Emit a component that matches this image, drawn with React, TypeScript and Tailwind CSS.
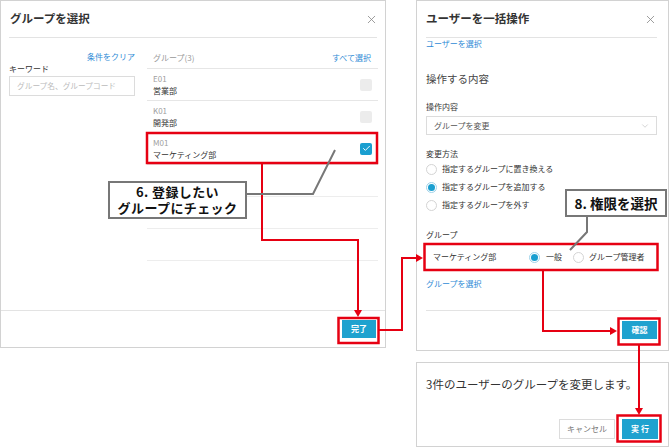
import { ChevronDown, X, Check } from 'lucide-react';

const BLUE = 'text-[#2f8bd6]';

function Radio({ checked }: { checked?: boolean }) {
  return checked ? (
    <span className="w-[11px] h-[11px] rounded-full border border-[#9fd3ea] bg-white flex items-center justify-center shrink-0">
      <span className="w-[7px] h-[7px] rounded-full bg-[#1a9fd0]" />
    </span>
  ) : (
    <span className="w-[11px] h-[11px] rounded-full border border-[#d4d4d4] bg-white shrink-0" />
  );
}

function GroupRow({ code, name, checked }: { code: string; name: string; checked?: boolean }) {
  return (
    <div className="h-[32px] border-b border-[#e6e6e6] flex items-center justify-between pl-[6px] pr-[6px]">
      <div className="flex flex-col">
        <span className="text-[8px] leading-[12px] text-[#a0a0a0]">{code}</span>
        <span className="text-[8px] leading-[12px] text-[#333]">{name}</span>
      </div>
      {checked ? (
        <span className="w-[12px] h-[12px] rounded-[2px] bg-[#1a9fd0] flex items-center justify-center">
          <Check size={9} strokeWidth={2.5} className="text-white" />
        </span>
      ) : (
        <span className="w-[12px] h-[12px] rounded-[2px] bg-[#ececec]" />
      )}
    </div>
  );
}

function SelectGroupPanel() {
  return (
    <div className="w-[386px] h-[348px] border border-[#d2d2d2] bg-white flex flex-col">
      <div className="h-[37px] mx-[8px] border-b border-[#e3e3e3] flex items-center justify-between">
        <span className="text-[11.5px] font-bold text-[#333] pl-[1px]">グループを選択</span>
        <X size={13} strokeWidth={1.5} className="text-[#888] mr-[-1px]" />
      </div>
      <div className="flex flex-1">
        <div className="w-[126px] ml-[8px] flex flex-col">
          <span className={`mt-[13px] text-[8px] leading-[12px] text-right ${BLUE}`}>条件をクリア</span>
          <span className="text-[8px] leading-[12px] text-[#333]">キーワード</span>
          <div className="mt-[1px] h-[20px] border border-[#dcdcdc] flex items-center px-[7px]">
            <span className="text-[7.7px] text-[#bbb]">グループ名、グループコード</span>
          </div>
        </div>
        <div className="w-[231px] ml-[12px]">
          <div className="h-[31px] border-b border-[#e6e6e6] flex items-end justify-between pl-[6px] pr-[7px] pb-[4px]">
            <span className="text-[8px] leading-[12px] text-[#999]">グループ(3)</span>
            <span className={`text-[8px] leading-[12px] ${BLUE}`}>すべて選択</span>
          </div>
          <GroupRow code="E01" name="営業部" />
          <GroupRow code="K01" name="開発部" />
          <GroupRow code="M01" name="マーケティング部" checked />
          <div className="h-[32px] border-b border-[#ededed]" />
          <div className="h-[32px] border-b border-[#ededed]" />
          <div className="h-[32px] border-b border-[#ededed]" />
        </div>
      </div>
      <div className="h-[37px] border-t border-[#e3e3e3] flex items-center justify-end pr-[9px] pb-[1px]">
        <button className="w-[34px] h-[18px] bg-[#1fa2cf] text-white text-[8px] font-bold">完了</button>
      </div>
    </div>
  );
}

function BulkPanel() {
  return (
    <div className="h-[351px] border border-[#d2d2d2] bg-white flex flex-col">
      <div className="h-[37px] ml-[9px] mr-[11px] border-b border-[#e3e3e3] flex items-center justify-between">
        <span className="text-[11.5px] font-bold text-[#333]">ユーザーを一括操作</span>
        <X size={13} strokeWidth={1.5} className="text-[#888]" />
      </div>
      <div className="flex flex-col ml-[9px] mr-[11px] flex-1">
        <span className={`text-[8px] leading-[12px] ${BLUE}`}>ユーザーを選択</span>
        <span className="mt-[21px] text-[10.5px] leading-[16px] text-[#444]">操作する内容</span>
        <span className="mt-[14px] text-[8px] leading-[12px] text-[#333]">操作内容</span>
        <div className="mt-[3px] h-[19px] border border-[#dcdcdc] flex items-center justify-between pl-[7px] pr-[6px]">
          <span className="text-[8px] text-[#555]">グループを変更</span>
          <ChevronDown size={10} strokeWidth={1.2} className="text-[#aaa]" />
        </div>
        <span className="mt-[13px] text-[8px] leading-[12px] text-[#333]">変更方法</span>
        <div className="flex flex-col">
          {[
            ['指定するグループに置き換える', false],
            ['指定するグループを追加する', true],
            ['指定するグループを外す', false],
          ].map(([label, on]) => (
            <div key={label as string} className="h-[18px] flex items-center gap-[5px]">
              <Radio checked={on as boolean} />
              <span className="text-[8px] text-[#333]">{label}</span>
            </div>
          ))}
        </div>
        <span className="mt-[15px] text-[8px] leading-[12px] text-[#333]">グループ</span>
        <div className="mt-[2px] h-[28px] flex items-center pl-[7px]">
          <span className="w-[96px] text-[8px] text-[#333]">マーケティング部</span>
          <Radio checked />
          <span className="ml-[6px] w-[27px] text-[8px] text-[#333]">一般</span>
          <Radio />
          <span className="ml-[5px] text-[8px] text-[#333]">グループ管理者</span>
        </div>
        <span className={`mt-[7px] text-[8px] leading-[12px] ${BLUE}`}>グループを選択</span>
      </div>
      <div className="h-[40px] ml-[9px] mr-[11px] border-t border-[#e3e3e3] flex items-start justify-end pt-[10px]">
        <button className="w-[35px] h-[18px] bg-[#1fa2cf] text-white text-[8px] font-bold">確認</button>
      </div>
    </div>
  );
}

function ConfirmDialog() {
  return (
    <div className="h-[85px] border border-[#d2d2d2] bg-white flex flex-col px-[9px]">
      <span className="mt-[12px] text-[11.5px] leading-[18px] text-[#333] whitespace-nowrap">3件のユーザーのグループを変更します。</span>
      <div className="mt-auto mb-[7px] flex justify-end gap-[7px] pr-[1px]">
        <button className="w-[56px] h-[20px] border border-[#dcdcdc] bg-white text-[8px] text-[#777]">キャンセル</button>
        <button className="w-[36px] h-[20px] bg-[#1fa2cf] text-white text-[8px] font-bold">実 行</button>
      </div>
    </div>
  );
}

export default function App() {
  return (
    <div className="relative w-[669px] h-[447px] bg-white font-['Noto_Sans_CJK_JP','Noto_Sans',sans-serif] overflow-hidden">
      <div className="flex">
        <SelectGroupPanel />
        <div className="ml-[30px] w-[253px] flex flex-col gap-[11px]">
          <BulkPanel />
          <ConfirmDialog />
        </div>
      </div>

      <svg className="absolute inset-0 pointer-events-none" width={669} height={447}>
        <g fill="none" stroke="#e60012" strokeWidth={2.5}>
          <rect x={147} y={133} width={230} height={30} />
          <rect x={338.5} y={318} width={40} height={25} />
          <rect x={424.5} y={244} width={233} height={26} />
          <rect x={618.5} y={318.5} width={41} height={26} />
          <rect x={617.5} y={415.5} width={43} height={26} />
        </g>
        <g fill="none" stroke="#e60012" strokeWidth={2}>
          <polyline points="262,164 262,240 358,240 358,311" />
          <polyline points="379,330 402,330 402,258 417,258" />
          <polyline points="543,271 543,331 611,331" />
          <polyline points="639,345 639,409" />
        </g>
        <g fill="#e60012">
          <polygon points="354,310 362,310 358,317" />
          <polygon points="416,254 416,262 423,258" />
          <polygon points="610,327 610,335 617,331" />
          <polygon points="635,408 643,408 639,415" />
        </g>
        <g fill="none" stroke="#777" strokeWidth={2}>
          <polyline points="247,194 313,194 335,150" />
          <polyline points="587,217 587,232 570,250" />
        </g>
      </svg>

      <div className="absolute left-[108px] top-[181px] w-[139px] h-[38px] border-2 border-[#777] bg-white flex items-center justify-center">
        <p className="text-center text-[13px] leading-[16px] font-bold tracking-[0.4px] text-[#111]">
          6. 登録したい
          <br />
          グループにチェック
        </p>
      </div>
      <div className="absolute left-[565px] top-[189px] w-[102px] h-[28px] border-2 border-[#777] bg-white flex items-center justify-center">
        <span className="text-[13.5px] font-bold text-[#111]">8. 権限を選択</span>
      </div>
    </div>
  );
}
